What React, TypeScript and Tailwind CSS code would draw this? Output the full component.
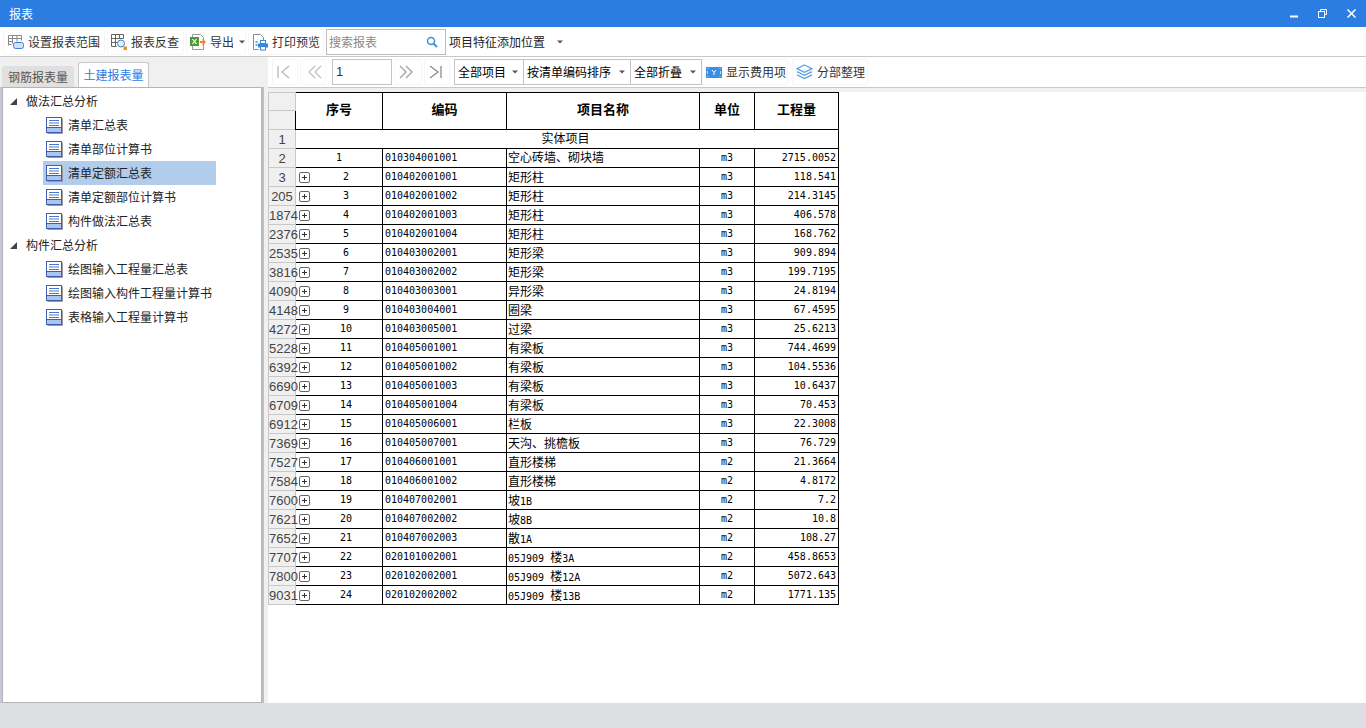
import React from 'react';

const rows = [
  ['2', '1', '010304001001', '空心砖墙、砌块墙', 'm3', '2715.0052'],
  ['3', '2', '010402001001', '矩形柱', 'm3', '118.541'],
  ['205', '3', '010402001002', '矩形柱', 'm3', '214.3145'],
  ['1874', '4', '010402001003', '矩形柱', 'm3', '406.578'],
  ['2376', '5', '010402001004', '矩形柱', 'm3', '168.762'],
  ['2535', '6', '010403002001', '矩形梁', 'm3', '909.894'],
  ['3816', '7', '010403002002', '矩形梁', 'm3', '199.7195'],
  ['4090', '8', '010403003001', '异形梁', 'm3', '24.8194'],
  ['4148', '9', '010403004001', '圈梁', 'm3', '67.4595'],
  ['4272', '10', '010403005001', '过梁', 'm3', '25.6213'],
  ['5228', '11', '010405001001', '有梁板', 'm3', '744.4699'],
  ['6392', '12', '010405001002', '有梁板', 'm3', '104.5536'],
  ['6690', '13', '010405001003', '有梁板', 'm3', '10.6437'],
  ['6709', '14', '010405001004', '有梁板', 'm3', '70.453'],
  ['6912', '15', '010405006001', '栏板', 'm3', '22.3008'],
  ['7369', '16', '010405007001', '天沟、挑檐板', 'm3', '76.729'],
  ['7527', '17', '010406001001', '直形楼梯', 'm2', '21.3664'],
  ['7584', '18', '010406001002', '直形楼梯', 'm2', '4.8172'],
  ['7600', '19', '010407002001', '坡1B', 'm2', '7.2'],
  ['7621', '20', '010407002002', '坡8B', 'm2', '10.8'],
  ['7652', '21', '010407002003', '散1A', 'm2', '108.27'],
  ['7707', '22', '020101002001', '05J909 楼3A', 'm2', '458.8653'],
  ['7800', '23', '020102002001', '05J909 楼12A', 'm2', '5072.643'],
  ['9031', '24', '020102002002', '05J909 楼13B', 'm2', '1771.135'],
];

const mono = "font-['DejaVu_Sans_Mono',monospace] text-[10px]";
const cellBase = 'border border-black h-[19px] p-0 leading-none text-black whitespace-nowrap overflow-hidden';
const cell = `${cellBase} text-[12px]`;
const monoCell = `${cellBase} ${mono}`;
const headCell = 'border border-black p-0 pb-[4px] text-center text-[13px] font-bold text-black';
const gutter = "border border-[#c8c8c8] bg-[#f0f0f0] p-0 text-center text-[13px] leading-none text-[#444] font-['Liberation_Sans',sans-serif]";

// latin runs in the name column use the mono look, like the digits elsewhere
function MixedText({ text }: { text: string }) {
  return (
    <>
      {text.split(/([A-Za-z0-9 ]+)/).map((part, i) =>
        /^[A-Za-z0-9 ]+$/.test(part) ? <span key={i} className={mono}>{part}</span> : <span key={i}>{part}</span>
      )}
    </>
  );
}

const DocIcon = () => (
  <svg width="17" height="17" viewBox="0 0 17 17" className="shrink-0">
    <rect x="1.5" y="16" width="15" height="1" fill="#9a9a9a" />
    <rect x="16" y="1.5" width="1" height="15" fill="#9a9a9a" />
    <rect x="0.5" y="0.5" width="15" height="15" fill="#fff" stroke="#3f5fae" />
    <rect x="1" y="10.5" width="14" height="4.5" fill="#a9c6f2" />
    <path d="M3 3.5h10M3 6h10M3 8.5h10" stroke="#4a78cf" />
    <path d="M1 10.5h14" stroke="#3f5fae" />
  </svg>
);

const PlusBox = () => (
  <svg width="11" height="11" viewBox="0 0 11 11" className="shrink-0">
    <rect x="0.5" y="0.5" width="10" height="10" rx="1.5" fill="#fff" stroke="#666" />
    <path d="M3 5.5h5M5.5 3v5" stroke="#333" />
  </svg>
);

const Caret = ({ className = '' }: { className?: string }) => (
  <svg width="6" height="4" viewBox="0 0 6 4" className={`shrink-0 ${className}`}>
    <path d="M0 .5h6L3 3.500z" fill="#555" />
  </svg>
);

const RangeIcon = () => (
  <svg width="17" height="16" viewBox="0 0 17 16" className="shrink-0">
    <path d="M1.500 1.500h13M1.500 4.500h13M1.500 7.500h4M1.500 10.500h3M1.500 1.500v10M5.500 1.500v8M10 1.500v6M14.500 1.500v5" stroke="#888" fill="none" />
    <rect x="6.500" y="8.500" width="10" height="6" rx="2" fill="#cfe2f7" stroke="#3b82d0" />
  </svg>
);

const ReverseIcon = () => (
  <svg width="16" height="17" viewBox="0 0 16 17" className="shrink-0">
    <path d="M.5.5h12M.5 4.500h12M.5 8.500h6M.5 12.500h5M.5.5v12M4.500.5v12M8.500.5v4M12.500.5v4" stroke="#666" fill="none" />
    <circle cx="10" cy="9.500" r="3.500" fill="#e6f1fb" stroke="#3f7fbf" />
    <rect x="12.500" y="12.500" width="3.500" height="3.500" fill="#f08a24" />
  </svg>
);

const ExcelIcon = () => (
  <svg width="16" height="17" viewBox="0 0 16 17" className="shrink-0">
    <path d="M2.500 .5h8l3 3v12h-11z" fill="#fff" stroke="#999" />
    <rect x="0" y="3" width="9" height="9" fill="#4f9a38" />
    <path d="M2.500 5l4 5M6.500 5l-4 5" stroke="#fff" strokeWidth="1.200" />
    <path d="M10 7h2.500V4.500L16 8l-3.500 3.500V9H10z" fill="#f0832a" />
  </svg>
);

const PrintIcon = () => (
  <svg width="16" height="17" viewBox="0 0 16 17" className="shrink-0">
    <path d="M1.500 .5h7l3 3v3M1.500 .5v15h5" fill="#fff" stroke="#8a8a8a" />
    <path d="M3.500 8h2M3.500 11h2" stroke="#3a86d6" strokeWidth="1.500" />
    <rect x="8.500" y="6.500" width="5" height="3" fill="#fff" stroke="#3a86d6" />
    <rect x="6" y="9.500" width="10" height="4" fill="#3a86d6" />
    <rect x="8.500" y="12.500" width="5" height="3.500" fill="#fff" stroke="#3a86d6" />
  </svg>
);

const SearchIcon = () => (
  <svg width="12" height="12" viewBox="0 0 12 12">
    <circle cx="5" cy="5" r="3.500" fill="none" stroke="#3f93cf" strokeWidth="1.500" />
    <path d="M7.500 7.500L11 11" stroke="#3f93cf" strokeWidth="2" />
  </svg>
);

const FeeIcon = () => (
  <svg width="16" height="11" viewBox="0 0 16 11" className="shrink-0">
    <rect width="16" height="11" fill="#3a8ee6" />
    <path d="M6 3l2 2.500L10 3M8 5.500V8" stroke="#fff" fill="none" />
    <path d="M1.500 1.500h1M13.500 1.500h1M1.500 9.500h1M13.500 9.500h1M1.500 4v3M14.500 4v3" stroke="#bcdcfa" />
  </svg>
);

const LayersIcon = () => (
  <svg width="17" height="16" viewBox="0 0 17 16" fill="none" stroke="#5b9fe6" strokeWidth="1.300" className="shrink-0">
    <path d="M8.500 1L16 4.700 8.500 8.400 1 4.700z" />
    <path d="M1 7.600l7.500 3.700L16 7.600" />
    <path d="M1 10.800l7.500 3.700 7.500-3.700" />
  </svg>
);

const NavIcon = ({ d, stroke }: { d: string; stroke: string }) => (
  <svg width="16" height="16" viewBox="0 0 16 16" fill="none" stroke={stroke} strokeWidth="1.300" className="overflow-visible">
    <path d={d} />
  </svg>
);

function ToolButton({ icon, label, width, caret }: { icon: React.ReactNode; label: string; width: string; caret?: boolean }) {
  return (
    <div className={`flex items-center gap-[4px] h-[26px] pl-[3px] rounded-[3px] border border-[#f6f6f6] text-[12px] text-[#333] whitespace-nowrap ${width}`}>
      {icon}
      <span>{label}</span>
      {caret && <Caret className="ml-[1px]" />}
    </div>
  );
}

function SelectBox({ label, width }: { label: string; width: string }) {
  return (
    <div className={`flex items-center justify-between h-[26px] pl-[3px] pr-[5px] border border-[#c4c4c4] -ml-px text-[12px] text-black whitespace-nowrap ${width}`}>
      <span>{label}</span>
      <Caret />
    </div>
  );
}

function TreeGroup({ label }: { label: string }) {
  return (
    <div className="flex items-center h-[24px] text-[12px] text-[#222]">
      <svg width="7" height="7" viewBox="0 0 7 7" className="ml-[7px] mr-[9px]">
        <path d="M7 0v7H0z" fill="#444" />
      </svg>
      {label}
    </div>
  );
}

function TreeItem({ label, selected }: { label: string; selected?: boolean }) {
  return (
    <div className={`flex items-center gap-[5px] h-[24px] ml-[40px] w-[173px] pl-[3px] text-[12px] text-[#222] ${selected ? 'bg-[#b2cceb]' : ''}`}>
      <DocIcon />
      <span className="whitespace-nowrap">{label}</span>
    </div>
  );
}

export default function App() {
  return (
    <div className="w-[1366px] h-[728px] flex flex-col overflow-hidden bg-white font-['Noto_Sans_CJK_SC','Liberation_Sans',sans-serif]">
      {/* title bar */}
      <div className="h-[27px] shrink-0 bg-[#2b7de1] flex items-center pl-[9px] text-[12px] text-white">
        <span>报表</span>
        <div className="ml-auto flex items-center gap-[20px] pr-[10px]">
          <svg width="8" height="8" viewBox="0 0 8 8"><path d="M0 6.500h8" stroke="#fff" strokeWidth="2" /></svg>
          <svg width="9" height="9" viewBox="0 0 9 9" fill="none" stroke="#fff"><path d="M2.500 2.500V.5h6v5h-2" /><rect x=".5" y="2.500" width="6" height="6" /></svg>
          <svg width="9" height="9" viewBox="0 0 9 9"><path d="M.5.5l8 8M8.500.5l-8 8" stroke="#fff" strokeWidth="1.500" /></svg>
        </div>
      </div>

      {/* main toolbar */}
      <div className="h-[30px] shrink-0 flex items-center gap-[2px] pl-[3px] pt-[1px] border-b border-[#c8c8c8]">
        <ToolButton icon={<RangeIcon />} label="设置报表范围" width="w-[102px]" />
        <ToolButton icon={<ReverseIcon />} label="报表反查" width="w-[77px]" />
        <ToolButton icon={<ExcelIcon />} label="导出" width="w-[60px]" caret />
        <ToolButton icon={<PrintIcon />} label="打印预览" width="w-[76px]" />
        <div className="flex items-center justify-between w-[120px] h-[26px] border border-[#bdbdbd] pl-[2px] pr-[7px] text-[12px] text-[#888]">
          <span>搜索报表</span>
          <SearchIcon />
        </div>
        <div className="flex items-center w-[120px] h-[26px] pl-[1px] text-[12px] text-[#222]">
          <span>项目特征添加位置</span>
          <Caret className="ml-[12px]" />
        </div>
      </div>

      <div className="flex-1 flex min-h-0">
        {/* left panel */}
        <div className="w-[268px] shrink-0 flex flex-col bg-[#f0f0f0]">
          <div className="h-[30px] shrink-0 flex items-end pl-[2px] gap-[4px] bg-[#f0f0f0] leading-none">
            <div className="w-[72px] h-[21px] flex items-center justify-center rounded-t-[3px] bg-[#e0e0e0] text-[12px] text-[#555]">钢筋报表量</div>
            <div className="w-[71px] h-[25px] flex items-center justify-center rounded-t-[3px] border border-b-0 border-[#c8c8c8] bg-white text-[12px] text-[#2b7de1]">土建报表量</div>
          </div>
          <div className="flex-1 min-h-0 flex">
            <div className="w-[2px] bg-[#c3cad6]" />
            <div className="w-[260px] border border-[#b4b4b4] bg-white pt-[1px]">
              <TreeGroup label="做法汇总分析" />
              <TreeItem label="清单汇总表" />
              <TreeItem label="清单部位计算书" />
              <TreeItem label="清单定额汇总表" selected />
              <TreeItem label="清单定额部位计算书" />
              <TreeItem label="构件做法汇总表" />
              <TreeGroup label="构件汇总分析" />
              <TreeItem label="绘图输入工程量汇总表" />
              <TreeItem label="绘图输入构件工程量计算书" />
              <TreeItem label="表格输入工程量计算书" />
            </div>
            <div className="w-[2px] bg-[#c0c0c0]" />
          </div>
        </div>

        {/* report area */}
        <div className="flex-1 min-w-0 flex flex-col">
          <div className="h-[31px] shrink-0 flex items-center pl-[4px] border-b border-[#c8c8c8]">
            <div className="w-[26px] h-[26px] flex items-center justify-center rounded-[3px] border border-[#f6f6f6]"><NavIcon stroke="#b8b8b8" d="M1 2v12M12 2L5 8l7 6" /></div>
            <div className="ml-[2px] w-[26px] h-[26px] flex items-center justify-center rounded-[3px] border border-[#f6f6f6]"><NavIcon stroke="#c0c0c0" d="M10 2L4 8l6 6M16 2l-6 6 6 6" /></div>
            <div className="ml-[6px] w-[60px] h-[26px] flex items-center pl-[3px] border border-[#c4c4c4] text-[13px] text-[#333] font-['Liberation_Sans',sans-serif]">1</div>
            <div className="ml-[2px] w-[28px] h-[26px] flex items-center justify-center rounded-[3px] border border-[#f6f6f6]"><NavIcon stroke="#a0a0a0" d="M0 2l6 6-6 6M6 2l6 6-6 6" /></div>
            <div className="ml-[2px] w-[26px] h-[26px] flex items-center justify-center rounded-[3px] border border-[#f6f6f6]"><NavIcon stroke="#8c8c8c" d="M1 2l8 6-8 6M12 2v12" /></div>
            <div className="ml-[5px] flex items-center">
              <SelectBox label="全部项目" width="w-[70px]" />
              <SelectBox label="按清单编码排序" width="w-[108px]" />
              <SelectBox label="全部折叠" width="w-[72px]" />
            </div>
            <ToolButton icon={<FeeIcon />} label="显示费用项" width="w-[86px]" />
            <div className="ml-[4px]"><ToolButton icon={<LayersIcon />} label="分部整理" width="w-[76px]" /></div>
          </div>

          <div className="flex-1 min-h-0 flex flex-col">
            <div className="h-[4px] shrink-0 bg-[#f0f0f0]" />
            <table className="table-fixed border-collapse w-[570px] font-['Noto_Sans_CJK_SC',sans-serif]">
              <colgroup>
                <col className="w-[27px]" />
                <col className="w-[87px]" />
                <col className="w-[124px]" />
                <col className="w-[193px]" />
                <col className="w-[55px]" />
                <col className="w-[84px]" />
              </colgroup>
              <thead>
                <tr className="h-[18px]">
                  <td className={gutter} />
                  <th rowSpan={2} className={headCell}>序号</th>
                  <th rowSpan={2} className={headCell}>编码</th>
                  <th rowSpan={2} className={headCell}>项目名称</th>
                  <th rowSpan={2} className={headCell}>单位</th>
                  <th rowSpan={2} className={headCell}>工程量</th>
                </tr>
                <tr className="h-[19px]">
                  <td className={gutter} />
                </tr>
              </thead>
              <tbody>
                <tr className="h-[19px]">
                  <td className={gutter}>1</td>
                  <td colSpan={5} className={`${cell} text-center pb-[2px] pr-[3px]`}>实体项目</td>
                </tr>
                {rows.map((r, i) => (
                  <tr key={r[0]} className="h-[19px]">
                    <td className={gutter}>{r[0]}</td>
                    <td className={monoCell}>
                      <div className={`flex items-center pl-[3px] ${i === 0 ? 'pr-[3px]' : ''}`}>
                        {i > 0 && <PlusBox />}
                        <span className="flex-1 text-center">{r[1]}</span>
                      </div>
                    </td>
                    <td className={`${monoCell} pl-[2px]`}>{r[2]}</td>
                    <td className={`${cell} pl-[1px] ${i === 0 ? 'pb-[2px]' : ''}`}><MixedText text={r[3]} /></td>
                    <td className={`${monoCell} text-center`}>{r[4]}</td>
                    <td className={`${monoCell} text-right pr-[2px]`}>{r[5]}</td>
                  </tr>
                ))}
              </tbody>
            </table>
          </div>
        </div>
      </div>

      {/* status bar */}
      <div className="h-[25px] shrink-0 bg-[#dedfe2]" />
    </div>
  );
}
